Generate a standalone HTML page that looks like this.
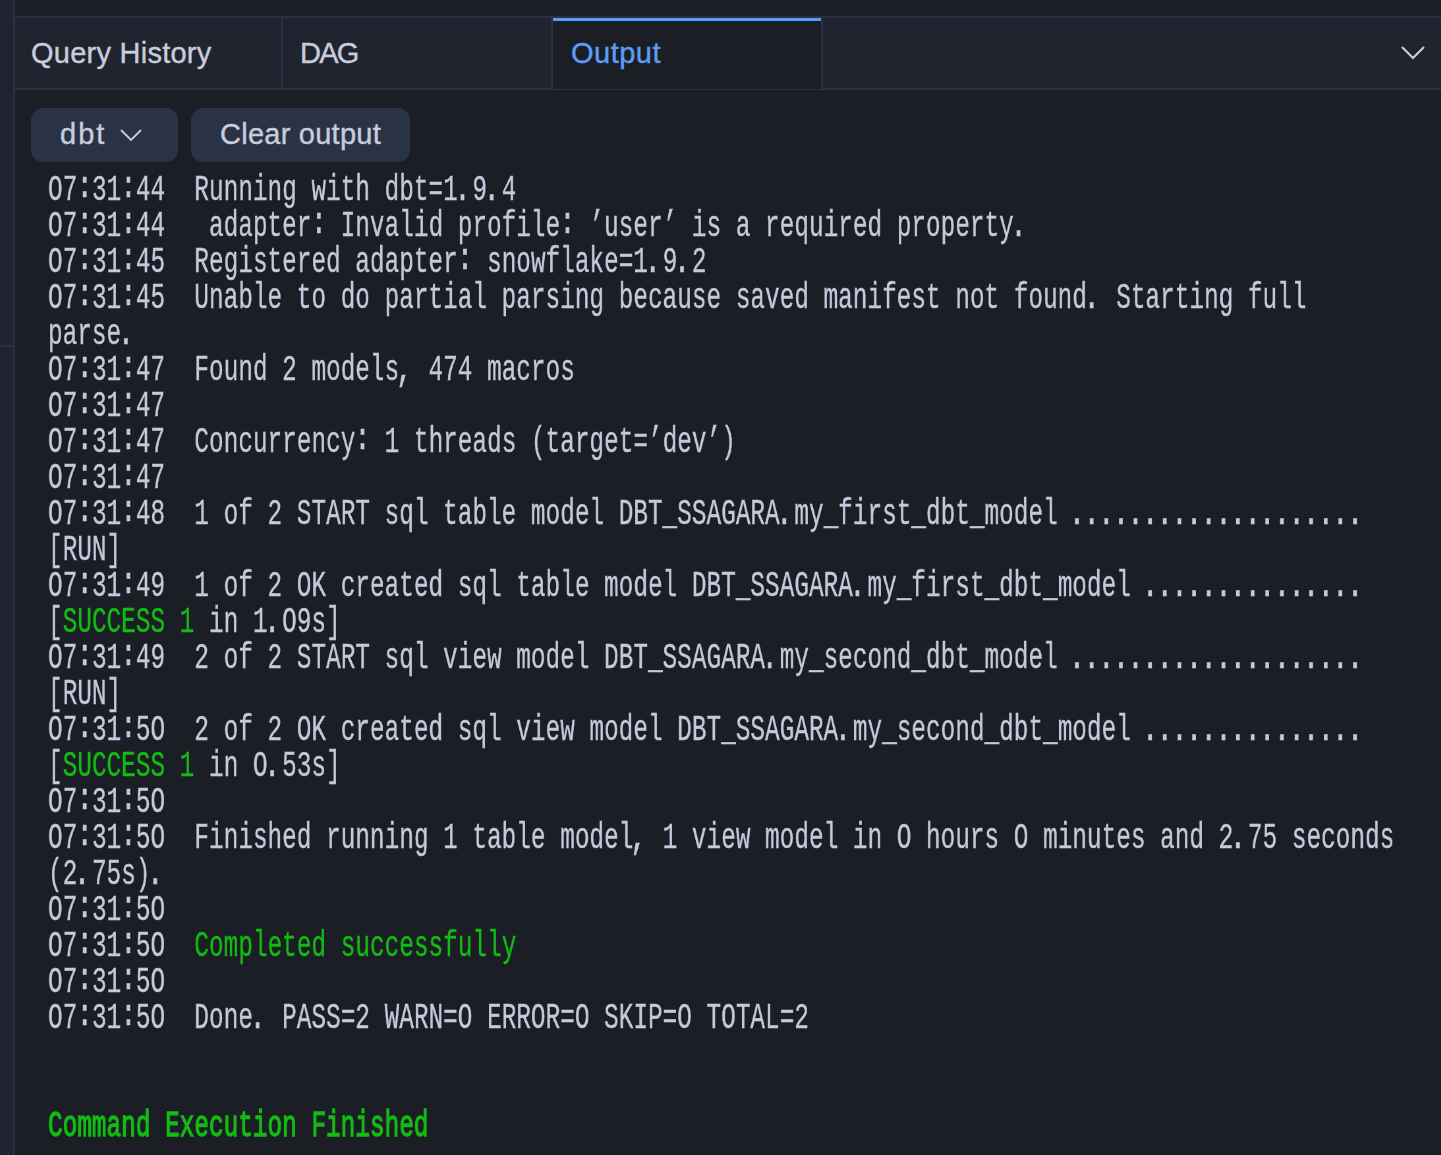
<!DOCTYPE html>
<html><head><meta charset="utf-8">
<style>
html,body{margin:0;padding:0;}
body{width:1441px;height:1155px;overflow:hidden;background:#1b1e25;position:relative;font-family:"Liberation Sans",sans-serif;}
.abs{position:absolute;}
#strip{left:0;top:0;width:13px;height:1155px;background:#1f242e;}
#vline{left:13px;top:0;width:2px;height:1155px;background:#2a3147;}
#hl-strip{left:0;top:345px;width:13px;height:2px;background:#2a3147;}
#topline{left:15px;top:16px;width:1426px;height:2px;background:#2a3147;}
#tabbar{left:15px;top:18px;width:1426px;height:70px;background:#1f242e;}
#botline{left:15px;top:88px;width:1426px;height:2px;background:#2a3147;}
.div{top:18px;width:2px;height:70px;background:#2a3147;}
#active{left:553px;top:18px;width:268px;height:71px;background:#1b1e25;}
#activebar{left:553px;top:18px;width:269px;height:3px;background:#5b9cf6;}
.tab{top:18px;height:70px;line-height:70px;font-size:29px;color:#c8ccdd;white-space:nowrap;-webkit-text-stroke:0.4px currentColor;}
.btn{top:108px;height:54px;border-radius:12px;background:#2a3246;}
.btxt{font-size:29px;color:#c8ccdd;white-space:nowrap;line-height:54px;-webkit-text-stroke:0.4px currentColor;}
#out{left:48px;top:172px;will-change:transform;transform-origin:0 0;transform:scaleX(0.659);font-family:"Liberation Mono",monospace;font-size:37px;color:#c5c9dc;-webkit-text-stroke:0.35px currentColor;}
#out div{height:36px;line-height:36px;white-space:pre;}
.g{color:#14bb14;}
.b{font-weight:normal;-webkit-text-stroke:1.3px currentColor;}
.p{position:relative;left:-4px;font-weight:bold;}
.c{font-weight:bold;position:relative;top:-3px;}
</style></head><body>
<div class="abs" id="strip"></div>
<div class="abs" id="vline"></div>
<div class="abs" id="hl-strip"></div>
<div class="abs" id="topline"></div>
<div class="abs" id="tabbar"></div>
<div class="abs" id="botline"></div>
<div class="abs" id="active"></div>
<div class="abs" id="activebar"></div>
<div class="abs div" style="left:281px"></div>
<div class="abs div" style="left:551px"></div>
<div class="abs div" style="left:821px"></div>
<div class="abs tab" style="left:31px;letter-spacing:0.25px">Query History</div>
<div class="abs tab" style="left:300px;letter-spacing:-1.8px">DAG</div>
<div class="abs tab" style="left:571px;color:#5c9df5;letter-spacing:0.5px">Output</div>
<svg class="abs" style="left:1398px;top:43px" width="30" height="20" viewBox="0 0 30 20"><path d="M4 4 L15 15 L26 4" fill="none" stroke="#c8ccdd" stroke-width="2.2"/></svg>
<div class="abs btn" style="left:31px;width:147px"></div>
<div class="abs btn" style="left:191px;width:219px"></div>
<div class="abs btxt" style="left:60px;top:107px;letter-spacing:2px">dbt</div>
<svg class="abs" style="left:118px;top:126px" width="26" height="18" viewBox="0 0 26 18"><path d="M3 4 L13 14 L23 4" fill="none" stroke="#c8ccdd" stroke-width="1.8"/></svg>
<div class="abs btxt" style="left:220px;top:107px;letter-spacing:0.25px">Clear output</div>
<div class="abs" id="out">
<div>O7<span class="c">:</span>31<span class="c">:</span>44  Running with dbt=1<span class="p">.</span>9<span class="p">.</span>4</div>
<div>O7<span class="c">:</span>31<span class="c">:</span>44   adapter<span class="c">:</span> Invalid profile<span class="c">:</span> ’user’ is a required property<span class="p">.</span></div>
<div>O7<span class="c">:</span>31<span class="c">:</span>45  Registered adapter<span class="c">:</span> snowflake=1<span class="p">.</span>9<span class="p">.</span>2</div>
<div>O7<span class="c">:</span>31<span class="c">:</span>45  Unable to do partial parsing because saved manifest not found<span class="p">.</span> Starting full</div>
<div>parse<span class="p">.</span></div>
<div>O7<span class="c">:</span>31<span class="c">:</span>47  Found 2 models<span class="p">,</span> 474 macros</div>
<div>O7<span class="c">:</span>31<span class="c">:</span>47</div>
<div>O7<span class="c">:</span>31<span class="c">:</span>47  Concurrency<span class="c">:</span> 1 threads (target=’dev’)</div>
<div>O7<span class="c">:</span>31<span class="c">:</span>47</div>
<div>O7<span class="c">:</span>31<span class="c">:</span>48  1 of 2 START sql table model DBT_SSAGARA<span class="p">.</span>my_first_dbt_model <span class="p">....................</span></div>
<div>[RUN]</div>
<div>O7<span class="c">:</span>31<span class="c">:</span>49  1 of 2 OK created sql table model DBT_SSAGARA<span class="p">.</span>my_first_dbt_model <span class="p">...............</span></div>
<div>[<span class="g">SUCCESS 1</span> in 1<span class="p">.</span>O9s]</div>
<div>O7<span class="c">:</span>31<span class="c">:</span>49  2 of 2 START sql view model DBT_SSAGARA<span class="p">.</span>my_second_dbt_model <span class="p">....................</span></div>
<div>[RUN]</div>
<div>O7<span class="c">:</span>31<span class="c">:</span>5O  2 of 2 OK created sql view model DBT_SSAGARA<span class="p">.</span>my_second_dbt_model <span class="p">...............</span></div>
<div>[<span class="g">SUCCESS 1</span> in O<span class="p">.</span>53s]</div>
<div>O7<span class="c">:</span>31<span class="c">:</span>5O</div>
<div>O7<span class="c">:</span>31<span class="c">:</span>5O  Finished running 1 table model<span class="p">,</span> 1 view model in O hours O minutes and 2<span class="p">.</span>75 seconds</div>
<div>(2<span class="p">.</span>75s)<span class="p">.</span></div>
<div>O7<span class="c">:</span>31<span class="c">:</span>5O</div>
<div>O7<span class="c">:</span>31<span class="c">:</span>5O  <span class="g">Completed successfully</span></div>
<div>O7<span class="c">:</span>31<span class="c">:</span>5O</div>
<div>O7<span class="c">:</span>31<span class="c">:</span>5O  Done<span class="p">.</span> PASS=2 WARN=O ERROR=O SKIP=O TOTAL=2</div>
<div></div>
<div></div>
<div><span class="g b">Command Execution Finished</span></div>
</div>
</body></html>
